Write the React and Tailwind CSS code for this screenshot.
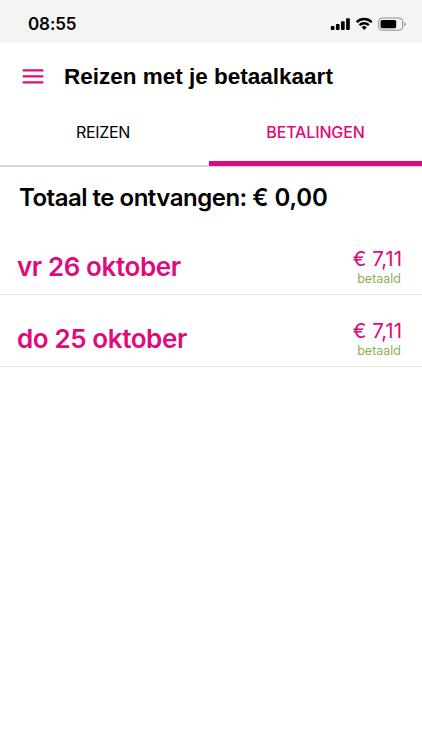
const payments = [
  { date: 'vr 26 oktober', amount: '€ 7,11', status: 'betaald' },
  { date: 'do 25 oktober', amount: '€ 7,11', status: 'betaald' },
]

function StatusBar() {
  return (
    <div className="flex h-[43px] items-center justify-between bg-[#f4f4f4] pr-[15px] pl-7 pt-[5px]">
      <span className="text-[17px] leading-none font-semibold tracking-[-0.1px]">08:55</span>
      <svg className="h-[15px] w-[77px]" viewBox="0 0 77 15" fill="#000">
        <rect x="0.8" y="9" width="3.7" height="3.9" rx="0.9" />
        <rect x="5.9" y="7" width="3.7" height="5.9" rx="0.9" />
        <rect x="11" y="4.3" width="3.7" height="8.6" rx="0.9" />
        <rect x="16.1" y="1.3" width="3.7" height="11.6" rx="0.9" />
        <g fill="none" stroke="#000" strokeWidth="2.4">
          <path d="M26.7 5.1a10.7 10.7 0 0 1 15 0" />
          <path d="M29.5 8.2a6.7 6.7 0 0 1 9.4 0" />
        </g>
        <path d="M31.6 10.3a3.7 3.7 0 0 1 5.2 0l-2.6 2.7z" />
        <rect x="48.7" y="1" width="24" height="12.2" rx="3.6" fill="none" stroke="#8c8c8c" />
        <rect x="50.6" y="3" width="15.6" height="8.2" rx="1.6" />
        <path d="M74.3 5.2v4c.9-.3 1.4-1.1 1.4-2s-.5-1.7-1.4-2z" fill="#8c8c8c" />
      </svg>
    </div>
  )
}

function Header() {
  return (
    <header className="flex h-[67px] items-center pl-[22px]">
      <svg className="h-4 w-[22px]" viewBox="0 0 22 16" stroke="#df0a7b" strokeWidth="2.3">
        <path d="M.7 1.3h20.6M.7 7.3h20.6M.7 13.3h20.6" />
      </svg>
      <h1 className="ml-5 pt-px font-['Liberation_Sans',Arial,sans-serif] text-[22.5px] leading-none font-bold whitespace-nowrap">
        Reizen met je betaalkaart
      </h1>
    </header>
  )
}

function Tabs() {
  return (
    <nav className="flex h-[57px] border-b-2 border-[#d6d6d6] text-base leading-none">
      <div className="w-[209px] pt-[14px] pr-[3px] text-center tracking-[-0.3px]">REIZEN</div>
      <div className="-mb-px flex-1 border-b-[5px] border-[#df0a7b] pt-[14px] text-center font-medium tracking-[-0.15px] text-[#df0a7b]">
        BETALINGEN
      </div>
    </nav>
  )
}

export default function App() {
  return (
    <div className="min-h-screen bg-white font-[Inter,sans-serif] text-black">
      <StatusBar />
      <Header />
      <Tabs />
      <h2 className="h-14 pt-[19px] pl-[19px] text-2xl leading-none font-semibold tracking-[-0.5px] whitespace-nowrap">
        Totaal te ontvangen: <span className="tracking-[-0.1px]">€ 0,00</span>
      </h2>
      {payments.map((p) => (
        <div key={p.date} className="flex h-[72px] justify-between border-b border-[#e6e6e6] pr-5 pl-[17px]">
          <span className="pt-[31px] text-[26px] leading-none font-semibold tracking-[-0.4px] text-[#df0a7b]">
            {p.date}
          </span>
          <div className="pt-[26px] text-right">
            <div className="text-[20.5px] leading-5 text-[#df0a7b]">{p.amount}</div>
            <div className="mt-[3px] pr-px text-[12.5px] leading-[13px] text-[#8db255]">{p.status}</div>
          </div>
        </div>
      ))}
    </div>
  )
}
